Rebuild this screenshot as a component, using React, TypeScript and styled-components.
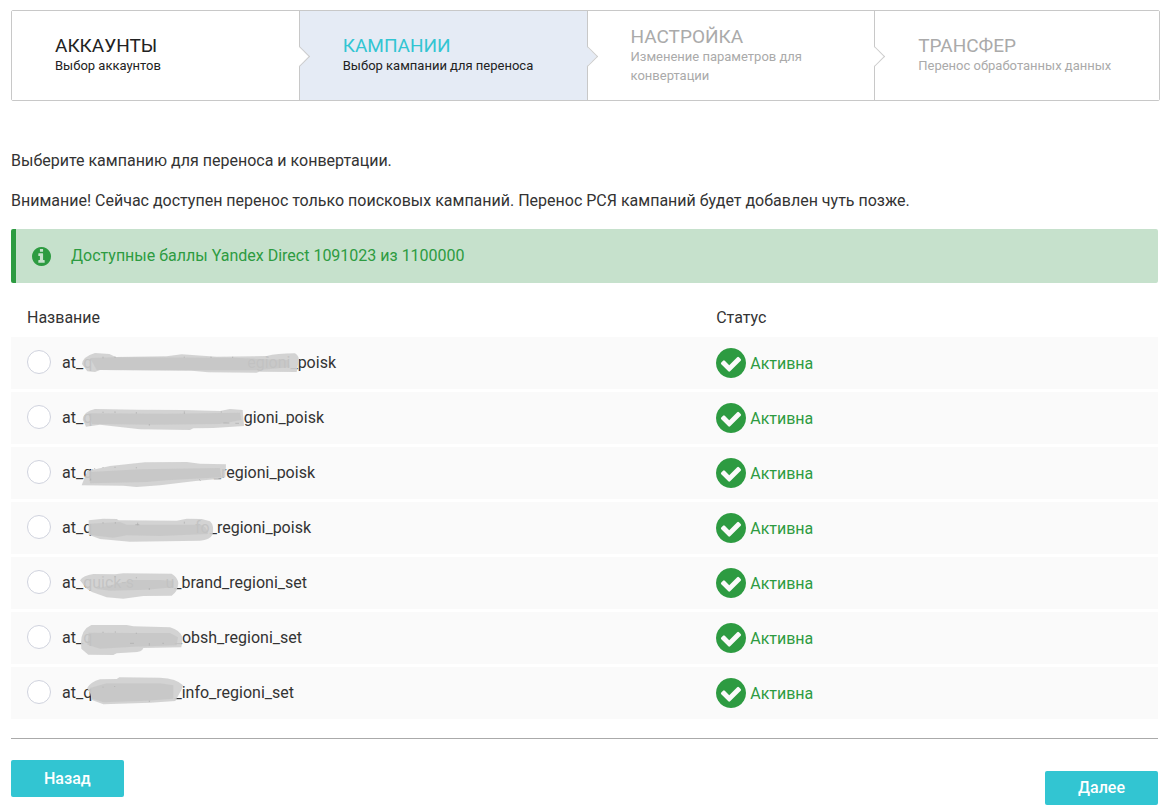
import React from "react";
import styled, { createGlobalStyle } from "styled-components";

const GlobalStyle = createGlobalStyle`
  *, *::before, *::after { box-sizing: border-box; }
  body {
    margin: 0;
    background: #fff;
    color: #333;
    font-family: Roboto, "Liberation Sans", sans-serif;
    font-size: 16px;
    line-height: 20px;
  }
`;

const Page = styled.main`
  padding: 10px 11px 5px;
`;

const Steps = styled.ol`
  display: flex;
  list-style: none;
  margin: 0 -2px 50px 0;
  padding: 0;
  border: 1px solid #c8c8c8;
  border-radius: 2px;
`;

type StepState = "done" | "active" | "pending";

const Step = styled.li<{ $state: StepState }>`
  position: relative;
  display: flex;
  flex: 1 1 288px;
  flex-direction: column;
  justify-content: center;
  height: 89px;
  padding: 0 43px;
  border-right: 1px solid #c8c8c8;
  background: ${(p) => (p.$state === "active" ? "#e5ebf5" : "#fff")};
  color: ${(p) => (p.$state === "pending" ? "#aaa" : "#222")};

  &:last-child {
    flex-basis: 284px;
    border-right: 0;
  }

  &:not(:last-child)::after {
    content: "";
    position: absolute;
    z-index: 1;
    top: 50%;
    right: -8px;
    width: 15px;
    height: 15px;
    margin-top: -7px;
    border: solid #ccc;
    border-width: 1px 1px 0 0;
    background: linear-gradient(45deg, transparent 45%, ${(p) => (p.$state === "active" ? "#e5ebf5" : "#fff")} 45%);
    transform: rotate(45deg);
  }
`;

const StepTitle = styled.span<{ $state: StepState }>`
  font-size: 19px;
  line-height: 20px;
  text-transform: uppercase;
  color: ${(p) => (p.$state === "active" ? "#32c5d2" : "inherit")};
`;

const StepNote = styled.span`
  font-size: 13px;
  line-height: 19px;
`;

const Text = styled.p`
  margin: 0 0 20px;
`;

const Notice = styled.div`
  display: flex;
  align-items: center;
  gap: 20px;
  height: 54px;
  margin: -2px 0 16px;
  padding: 0 16px;
  border-left: 5px solid #2d9b41;
  border-radius: 2px;
  background: #c6e1cc;
  color: #2d9b41;
`;

const Icon = styled.svg<{ $size: number }>`
  display: block;
  flex: none;
  width: ${(p) => p.$size}px;
  height: ${(p) => p.$size}px;
  fill: currentColor;
`;

const Campaigns = styled.table`
  width: 100%;
  table-layout: fixed;
  border-spacing: 0 3px;

  th:last-child,
  td:last-child {
    padding-left: 17px;
  }
`;

const HeadCell = styled.th<{ $width: string }>`
  width: ${(p) => p.$width};
  height: 32px;
  padding: 0 16px;
  font-weight: 400;
  text-align: left;
`;

const Cell = styled.td`
  height: 52px;
  padding: 0 16px;
  background: #fafafa;
`;

const Choice = styled.label`
  display: flex;
  align-items: center;
  gap: 11px;
  height: 52px;
  cursor: pointer;
`;

const Radio = styled.input`
  appearance: none;
  flex: none;
  width: 24px;
  height: 24px;
  margin: 0 0 2px;
  border: 1px solid #d0d3de;
  border-radius: 50%;
  background: #fff;

  &:checked {
    border: 7px solid #32c5d2;
  }
`;

const Name = styled.span<{ $width: number }>`
  position: relative;
  display: flex;
  align-items: center;
  justify-content: space-between;
  width: ${(p) => p.$width}px;
  height: 52px;
`;

const Smear = styled.svg`
  position: absolute;
  top: 0;
  left: 0;
  width: 300px;
  height: 52px;
`;

const Status = styled.span`
  display: flex;
  align-items: center;
  gap: 4px;
  color: #2d9b41;
`;

const StatusText = styled.span`
  padding-top: 2px;
`;

const Footer = styled.footer`
  display: flex;
  align-items: flex-start;
  justify-content: space-between;
  margin-top: 16px;
  padding-top: 21px;
  border-top: 1px solid #aaa;
`;

const Button = styled.button<{ $lower?: boolean }>`
  height: ${(p) => (p.$lower ? 34 : 37)}px;
  margin-top: ${(p) => (p.$lower ? 11 : 0)}px;
  padding: 0 33px;
  border: 0;
  border-radius: 2px;
  background: #32c5d2;
  color: #fff;
  font: 500 16px/20px Roboto, "Liberation Sans", sans-serif;
  cursor: pointer;
`;

const steps: { title: string; note: string; state: StepState }[] = [
  { title: "Аккаунты", note: "Выбор аккаунтов", state: "done" },
  { title: "Кампании", note: "Выбор кампании для переноса", state: "active" },
  { title: "Настройка", note: "Изменение параметров для конвертации", state: "pending" },
  { title: "Трансфер", note: "Перенос обработанных данных", state: "pending" },
];

// Hidden parts of the names are painted over: a light outer stroke and a darker core.
const campaigns = [
  {
    head: "at_q", tail: "egioni_poisk", width: 274, top: 3,
    outer: "M246 84Q248 62 285 51L328 54L347 63L500 61L545 55L650 62L800 60Q830 52 885 52Q898 60 896 74L890 108L778 107L770 110L625 109L575 104L300 102L285 108L262 106Z",
    core: "M270 66L340 64L700 65L800 70L865 72L868 94L770 103L600 103L290 102Z",
    marks: "M309 62v5M345 61v5M553 62v3M633 62v4M698 62v4M804 62v3",
  },
  {
    head: "at_q", tail: "gioni_poisk", width: 262, top: 168,
    outer: "M248 250Q252 226 285 219L410 221L550 222L660 225L690 219L728 222L732 270L640 276L580 277L570 282L420 280L300 266L258 272Z",
    core: "M265 232L500 233L720 230L724 252L660 264L460 266L276 264Z",
    marks: "M309 227v4M345 226v5M409 228v5M553 226v8M664 226v4M448 264v5M670 261h18M706 262h11",
  },
  {
    head: "at_q", tail: "_regioni_poisk", width: 253, top: 3,
    outer: "M245 118L255 92L262 75L330 60L435 49L560 48L600 53L678 55L676 94L660 98L580 106L480 118L410 123L370 119Z",
    core: "M268 78L420 70L660 66L664 94L500 103L440 108L270 112Z",
    marks: "M278 69v4M284 66v4M309 63v3M345 62v4M409 63v4M597 100l5 4M272 98v5",
  },
  {
    head: "at_q", tail: "fo_regioni_poisk", width: 249, top: 168,
    outer: "M266 223L310 218L350 219L356 223L530 224L560 218L605 219L630 226Q643 238 638 265Q630 283 600 284L390 287L300 279L266 266Z",
    core: "M268 233L360 228L380 236L600 236Q622 240 624 264L480 270L380 268L340 275L270 267Z",
    marks: "M309 228v5M346 228v5M413 230v8M406 236h12M553 227v6",
  },
  {
    head: "at_quick-s", tail: "u_brand_regioni_set", width: 245, top: 3,
    outer: "M240 73Q250 58 280 54L345 55L370 52L515 53Q534 65 535 82Q533 108 515 119L430 120L370 128L320 124L276 108L260 98Z",
    core: "M285 98L400 72L480 72L520 74L520 94L440 101L330 104Z",
    marks: "M345 60v4M409 63v4M448 96v6",
  },
  {
    head: "at_q", tail: "_obsh_regioni_set", width: 240, top: 168,
    outer: "M243 260Q244 220 274 207L380 207L400 211L510 214Q540 222 548 245L544 274L430 276Q426 289 400 289L350 292L340 297L265 296L244 278Z",
    core: "M266 230L400 231L510 231L534 244L530 268L400 272L300 278L262 266Z",
    marks: "M309 227v4M346 226v4M409 230v4M448 261v8M390 262h12M487 262h5",
  },
  {
    head: "at_q", tail: "_info_regioni_set", width: 232, top: 333,
    outer: "M261 397Q272 377 300 370L350 369L358 364L480 365Q530 367 549 388L545 400L526 435L450 440L310 445L276 432L270 410Z",
    core: "M270 396L320 382L480 382L520 388L520 428L440 434L310 439L276 428Z",
    marks: "M309 392v3M344 390v3M448 434v4",
  },
];

const INFO =
  "M1024 1376v-160q0-14-9-23t-23-9h-96v-512q0-14-9-23t-23-9h-320q-14 0-23 9t-9 23v160q0 14 9 23t23 9h96v320h-96q-14 0-23 9t-9 23v160q0 14 9 23t23 9h448q14 0 23-9t9-23zM896 480v-160q0-14-9-23t-23-9h-192q-14 0-23 9t-9 23v160q0 14 9 23t23 9h192q14 0 23-9t9-23zM1536 896q0 209-103 385.5t-279.5 279.5t-385.5 103t-385.5-103t-279.5-279.5t-103-385.5t103-385.5t279.5-279.5t385.5-103t385.5 103t279.5 279.5t103 385.5z";
const CHECK =
  "M1284 734q0-28-18-46l-91-90q-19-19-45-19t-45 19l-408 407l-226-226q-19-19-45-19t-45 19l-91 90q-18 18-18 46q0 27 18 45l362 362q19 19 45 19q27 0 46-19l543-543q18-18 18-45zM1536 896q0 209-103 385.5t-279.5 279.5t-385.5 103t-385.5-103t-279.5-279.5t-103-385.5t103-385.5t279.5-279.5t385.5-103t385.5 103t279.5 279.5t103 385.5z";

function Glyph({ path, size }: { path: string; size: number }) {
  return (
    <Icon $size={size} viewBox="0 128 1536 1536" aria-hidden="true">
      <path fillRule="evenodd" d={path} />
    </Icon>
  );
}

export default function App() {
  return (
    <>
      <GlobalStyle />
      <Page>
        <Steps>
          {steps.map((s) => (
            <Step key={s.title} $state={s.state} aria-current={s.state === "active" ? "step" : undefined}>
              <StepTitle $state={s.state}>{s.title}</StepTitle>
              <StepNote>{s.note}</StepNote>
            </Step>
          ))}
        </Steps>

        <Text>Выберите кампанию для переноса и конвертации.</Text>
        <Text>
          Внимание! Сейчас доступен перенос только поисковых кампаний. Перенос РСЯ кампаний будет добавлен чуть позже.
        </Text>

        <Notice role="status">
          <Glyph path={INFO} size={19} />
          <span>Доступные баллы Yandex Direct 1091023 из 1100000</span>
        </Notice>

        <Campaigns>
          <thead>
            <tr>
              <HeadCell scope="col" $width="60%">Название</HeadCell>
              <HeadCell scope="col" $width="40%">Статус</HeadCell>
            </tr>
          </thead>
          <tbody>
            {campaigns.map((c, i) => (
              <tr key={i}>
                <Cell>
                  <Choice>
                    <Radio type="radio" name="campaign" value={i} />
                    <Name $width={c.width}>
                      <span>{c.head}</span>
                      <span>{c.tail}</span>
                      <Smear viewBox={`186 ${c.top} 900 156`} aria-hidden="true">
                        <path d={c.outer} fill="#cfcfcf" fillOpacity="0.92" />
                        <path d={c.core} fill="#c2c2c2" fillOpacity="0.6" />
                        <path d={c.marks} fill="none" stroke="#aaa" strokeWidth="2" />
                      </Smear>
                    </Name>
                  </Choice>
                </Cell>
                <Cell>
                  <Status>
                    <Glyph path={CHECK} size={30} />
                    <StatusText>Активна</StatusText>
                  </Status>
                </Cell>
              </tr>
            ))}
          </tbody>
        </Campaigns>

        <Footer>
          <Button type="button">Назад</Button>
          <Button type="button" $lower>Далее</Button>
        </Footer>
      </Page>
    </>
  );
}
